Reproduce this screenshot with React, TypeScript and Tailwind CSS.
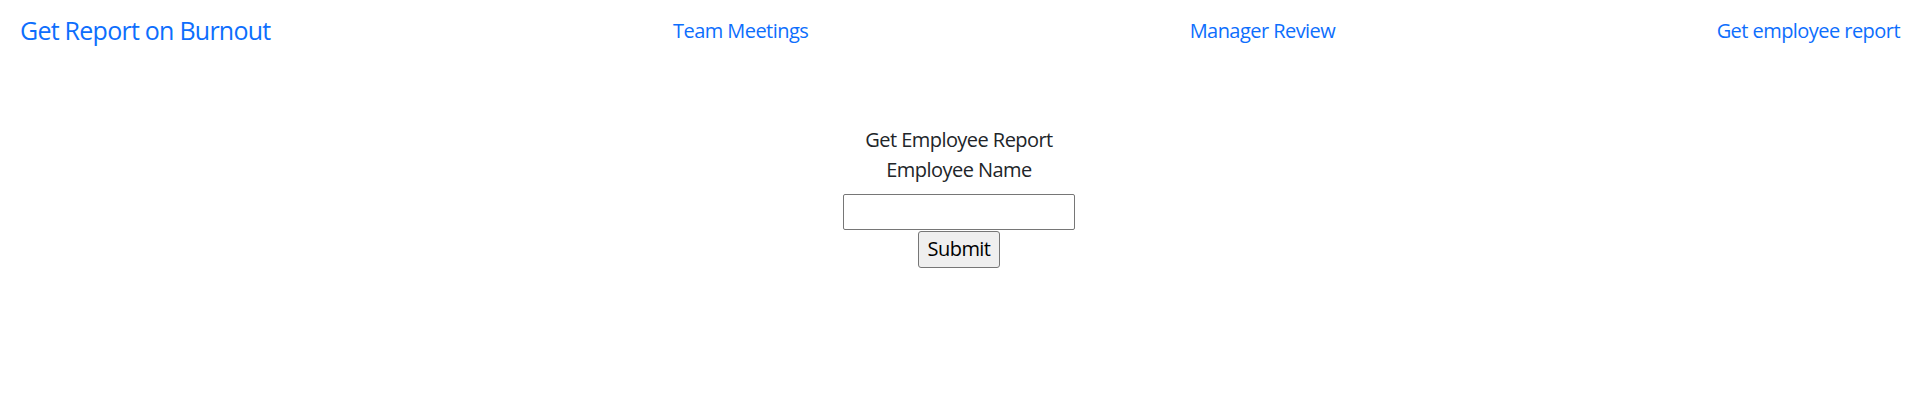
import React, { useState } from 'react';

const App = () => {
  const [name, setName] = useState('');

  return (
    <div className="min-h-[405px] bg-white text-[#212529] text-[20px] leading-[1.5] tracking-[-0.55px] font-['Open_Sans','Liberation_Sans',sans-serif]">
      {/* Navbar */}
      <nav className="flex items-center pt-[12px] pb-[8px] pl-[20px]">
        <a href="#" className="text-[25px] leading-[1.5] tracking-[-0.75px] text-[#0d6efd] whitespace-nowrap">
          Get Report on Burnout
        </a>
        <ul className="ml-auto mr-[10px] w-[1243px] flex justify-between">
          <li>
            <a href="#" className="px-[8px] text-[#0d6efd] whitespace-nowrap">Team Meetings</a>
          </li>
          <li>
            <a href="#" className="px-[8px] text-[#0d6efd] whitespace-nowrap">Manager Review</a>
          </li>
          <li>
            <a href="#" className="px-[8px] text-[#0d6efd] whitespace-nowrap">Get employee report</a>
          </li>
        </ul>
      </nav>

      {/* Form */}
      <form className="mt-[66px] flex flex-col items-center text-center" onSubmit={(e) => e.preventDefault()}>
        <p className="mt-[1px]">Get Employee Report</p>
        <label htmlFor="employeeName" className="mb-[9px]">Employee Name</label>
        <input
          id="employeeName"
          type="text"
          value={name}
          onChange={(e) => setName(e.target.value)}
          className="w-[232px] h-[36px] border border-[#767676] rounded-[2px] px-[2px] outline-none"
        />
        <button
          type="submit"
          className="mt-[1px] w-[82px] h-[37px] bg-[#efefef] border border-[#767676] rounded-[3px] text-black text-[20px] leading-none"
        >
          Submit
        </button>
      </form>
    </div>
  );
};

export default App;
